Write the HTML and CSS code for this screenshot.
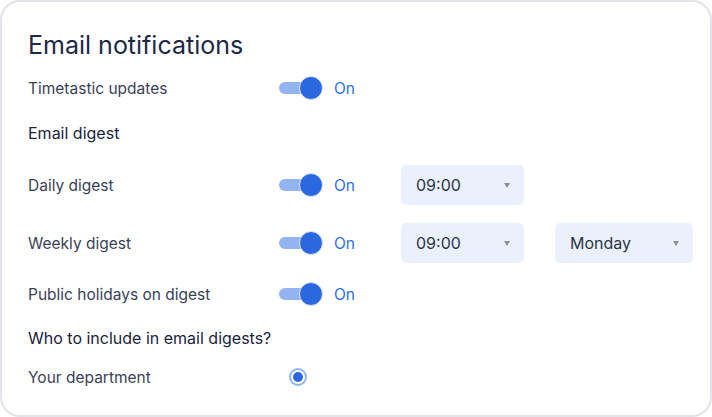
FILE: index.html
```html
<!DOCTYPE html>
<html lang="en">
<head>
  <meta charset="UTF-8" />
  <title>Email notifications</title>
  <link rel="stylesheet" href="styles.css">
</head>
<body>
  <div class="card">
    <h1>Email notifications</h1>

    <div class="row row-first">
      <span class="label">Timetastic updates</span>
      <span class="toggle"><span class="knob"></span></span>
      <span class="state">On</span>
    </div>

    <h2 class="heading heading-digest">Email digest</h2>

    <div class="row row-daily">
      <span class="label">Daily digest</span>
      <span class="toggle"><span class="knob"></span></span>
      <span class="state">On</span>
      <div class="select select-time">09:00<span class="caret"></span></div>
    </div>

    <div class="row row-weekly">
      <span class="label">Weekly digest</span>
      <span class="toggle"><span class="knob"></span></span>
      <span class="state">On</span>
      <div class="select select-time">09:00<span class="caret"></span></div>
      <div class="select select-day">Monday<span class="caret"></span></div>
    </div>

    <div class="row row-holidays">
      <span class="label">Public holidays on digest</span>
      <span class="toggle"><span class="knob"></span></span>
      <span class="state">On</span>
    </div>

    <h2 class="heading heading-who">Who to include in email digests?</h2>

    <div class="row row-dept">
      <span class="label">Your department</span>
      <span class="radio"><span class="dot"></span></span>
    </div>
  </div>
</body>
</html>
```

FILE: styles.css
```css
html {
  box-sizing: border-box;
}
*, *:before, *:after {
  box-sizing: inherit;
}

body {
  margin: 0;
  background: #ffffff;
  font-family: 'Inter', 'Liberation Sans', sans-serif;
  color: #3a4257;
}

.card {
  width: 712px;
  height: 417px;
  border: 2px solid #e1e5ea;
  border-radius: 20px;
  padding: 27px 0 0 26px;
  background: white;
}

h1 {
  margin: 0;
  font-size: 25px;
  line-height: 32px;
  font-weight: 400;
  color: #1e2945;
}

.heading {
  margin: 0;
  font-size: 16px;
  line-height: 30px;
  font-weight: 400;
  color: #1a2440;
}
.heading-digest { margin-top: 10px; }
.heading-who { margin-top: 9px; }

.row {
  display: flex;
  align-items: center;
  height: 40px;
}
.row-first { margin-top: 7px; }
.row-daily { margin-top: 17px; }
.row-weekly { margin-top: 18px; }
.row-holidays { margin-top: 11px; }
.row-dept { margin-top: 4px; }

.label {
  width: 251px;
  font-size: 15.5px;
  color: #3a4257;
}

/* toggle switch */
.toggle {
  position: relative;
  width: 30px;
  height: 12px;
  border-radius: 6px;
  background: #93b4f0;
}
.knob {
  position: absolute;
  left: 20px;
  top: -6px;
  width: 24px;
  height: 24px;
  border-radius: 50%;
  background: #2b68df;
  border: 1px solid #e4e9f3;
}

.state {
  margin-left: 25px;
  width: 67px;
  font-size: 15.5px;
  color: #2f6fe0;
}

.select {
  position: relative;
  height: 40px;
  border-radius: 5px;
  background: #eaf1fc;
  padding-left: 15px;
  font-size: 16px;
  line-height: 40px;
  color: #2d3448;
}
.select-time { width: 123px; }
.select-day {
  width: 138px;
  margin-left: 31px;
}
.caret {
  position: absolute;
  right: 14px;
  top: 18px;
  width: 0;
  height: 0;
  border-left: 3.5px solid transparent;
  border-right: 3.5px solid transparent;
  border-top: 5px solid #8a8f99;
}

/* radio */
.radio {
  margin-left: 10px;
  width: 18px;
  height: 18px;
  border-radius: 50%;
  border: 2px solid #93b4f2;
  display: flex;
  align-items: center;
  justify-content: center;
}
.dot {
  width: 10px;
  height: 10px;
  border-radius: 50%;
  background: #2b68df;
}
```
